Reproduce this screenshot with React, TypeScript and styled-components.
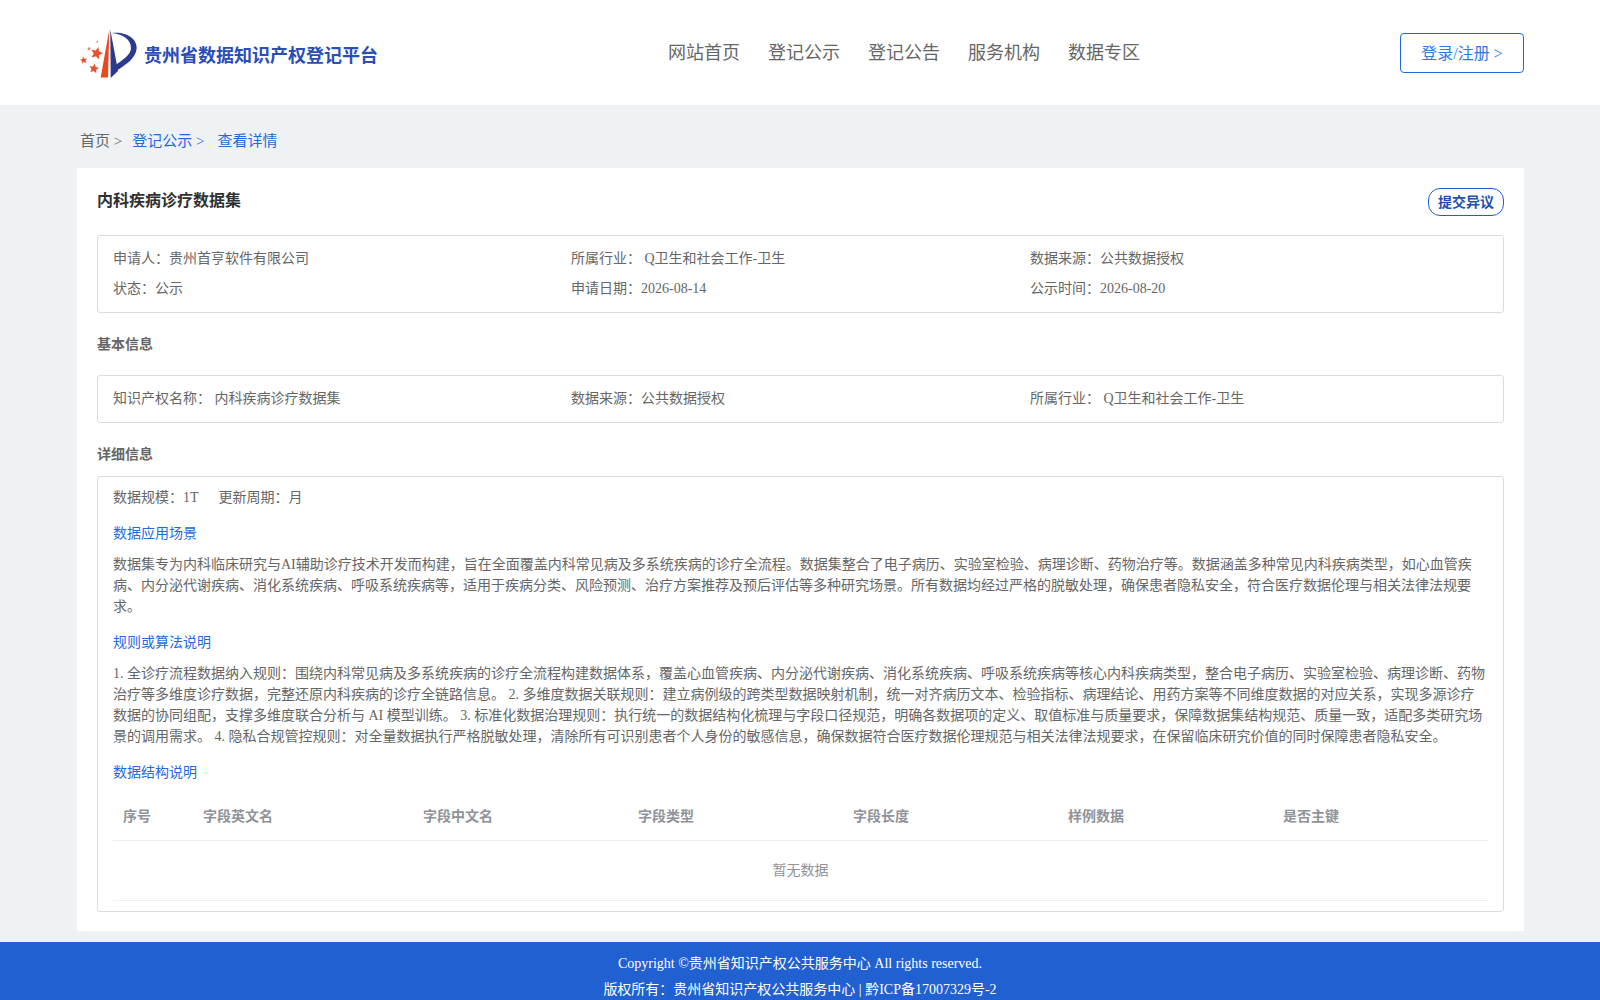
import React from "react";
import styled, { createGlobalStyle } from "styled-components";

const FONT = `"Liberation Serif", "Noto Sans CJK SC", serif`;
const Global = createGlobalStyle`
  html, body { margin: 0; padding: 0; background: #eff2f5; }
  body { font-family: ${FONT}; font-size: 14px; color: #666; }
  * { box-sizing: border-box; }
`;
const Header = styled.header`
  height: 105px; background: #fff; display: flex; align-items: center; padding: 0 76px 0 80px;
`;
const Brand = styled.div`display: flex; align-items: center; width: 588px; padding-top: 2px;`;
const BrandName = styled.span`
  font-size: 18px; font-weight: 700; color: #2a4db8; margin-left: 6px;
  font-family: ${FONT};
`;
const Nav = styled.nav`display: flex; gap: 28px; flex: 1;`;
const NavItem = styled.a`font-size: 18px; color: #666; line-height: 26px;`;
const LoginButton = styled.button`
  width: 124px; height: 40px; border: 1px solid #1e6ae0; border-radius: 4px; background: #fff;
  color: #2b7be8; font: 16px ${FONT}; padding: 0 0 2px;
`;
const Main = styled.main`padding: 0 76px 11px 77px;`;
const Crumbs = styled.div`
  height: 63px; display: flex; align-items: center; padding: 6px 0 0 3px; font-size: 15px;
`;
const Crumb = styled.span<{ $on?: boolean; $gap?: number }>`
  color: ${(p) => (p.$on ? "#1e6ae0" : "#666")}; margin-right: ${(p) => p.$gap ?? 0}px;
`;
const Card = styled.section`background: #fff; padding: 20px; height: 763px;`;
const TitleRow = styled.div`display: flex; justify-content: space-between; align-items: flex-start; height: 47px;`;
const Title = styled.h1`margin: 0; font-size: 16px; line-height: 24px; font-weight: 700; color: #303133; padding-top: 1px;`;
const Dissent = styled.button`
  width: 76px; height: 28px; border: 1px solid #1e5fd0; border-radius: 12px; background: #fff; color: #2150b0;
  font: 700 14px ${FONT}; padding: 0 0 3px;
`;
const Box = styled.div`border: 1px solid #d9dbdf; border-radius: 3px; padding: 0 15px;`;
const InfoGrid = styled(Box)<{ $h: number }>`
  height: ${(p) => p.$h}px; display: grid; grid-template-columns: 458px 459px 1fr; align-content: center; row-gap: 8px;
`;
const Info = styled.div`line-height: 22px; white-space: pre;`;
const Section = styled.h2`
  margin: 0; font-size: 14px; font-weight: 700; color: #666; line-height: 22px; padding: 21px 0 19px;
`;
const DetailTitle = styled(Section)`padding: 21px 0 10px;`;
const Detail = styled(Box)`height: 436px; padding-top: 10px;`;
const Meta = styled.div`display: flex; gap: 20px; line-height: 22px;`;
const SubTitle = styled.h3<{ $top?: number }>`
  margin: 0; padding-top: ${(p) => p.$top ?? 14}px; font-size: 14px; font-weight: 400; color: #1e6ae0; line-height: 22px;
`;
const Para = styled.p`margin: 0; padding-top: 9px; line-height: 21px;`;
const Table = styled.table`width: 100%; border-collapse: collapse; table-layout: fixed; margin-top: 6px;`;
const Th = styled.th<{ $w: number }>`
  width: ${(p) => p.$w}px; height: 50px; padding: 0 10px; text-align: left; font-size: 14px; font-weight: 700; color: #909399;
  border-bottom: 1px solid #ebeef5;
`;
const Empty = styled.td`
  height: 60px; padding: 0 0 2px; text-align: center; color: #909399; border-bottom: 1px solid #ebeef5;
`;
const Footer = styled.footer`
  background: #2160d0; color: #fff; height: 58px; text-align: center; line-height: 26px; padding-top: 9px; overflow: hidden;
`;

const Star = ({ x, y, r, rot = 0 }: { x: number; y: number; r: number; rot?: number }) => {
  const pts = Array.from({ length: 10 }, (_, i) => {
    const a = ((i * 36 - 90 + rot) * Math.PI) / 180;
    const q = i % 2 ? r * 0.45 : r;
    return `${(x + q * Math.cos(a)).toFixed(2)},${(y + q * Math.sin(a)).toFixed(2)}`;
  }).join(" ");
  return <polygon points={pts} fill="#e8512a" />;
};
const Logo = () => (
  <svg width="58" height="50" viewBox="0 0 58 50" aria-hidden="true">
    <Star x={16.7} y={24.3} r={6.5} rot={15} />
    <Star x={3.7} y={31.3} r={3.8} rot={-10} />
    <Star x={14} y={39.7} r={5.2} rot={10} />
    <circle cx={9} cy={19.7} r={1.5} fill="#ee8a6c" />
    <circle cx={17.3} cy={12.7} r={1} fill="#ee8a6c" />
    <path d="M29.3 0.5 L28 48.5 L20.7 48.5 Z" fill="#e8491d" />
    <path d="M30.3 0.5 L38 42 L30.7 49 Z" fill="#2a3a8f" />
    <path d="M31.7 4 C45 2 57 9 56.7 19 C56 29 47 35 36 42 L34.5 37 C42 31 51 26 51 19 C51 10 42 5 31.7 4 Z" fill="#2a3a8f" />
  </svg>
);

const cols = [
  ["序号", 80], ["字段英文名", 220], ["字段中文名", 215], ["字段类型", 215],
  ["字段长度", 215], ["样例数据", 215], ["是否主键", 215],
] as const;

export default function App() {
  return (
    <>
      <Global />
      <Header>
        <Brand>
          <Logo />
          <BrandName>贵州省数据知识产权登记平台</BrandName>
        </Brand>
        <Nav>
          {["网站首页", "登记公示", "登记公告", "服务机构", "数据专区"].map((t) => (
            <NavItem key={t}>{t}</NavItem>
          ))}
        </Nav>
        <LoginButton>登录/注册 &gt;</LoginButton>
      </Header>
      <Main>
        <Crumbs>
          <Crumb $gap={10}>首页 &gt;</Crumb>
          <Crumb $on $gap={13}>登记公示 &gt;</Crumb>
          <Crumb $on>查看详情</Crumb>
        </Crumbs>
        <Card>
          <TitleRow>
            <Title>内科疾病诊疗数据集</Title>
            <Dissent>提交异议</Dissent>
          </TitleRow>
          <InfoGrid $h={78}>
            <Info>申请人：贵州首亨软件有限公司</Info>
            <Info>所属行业： Q卫生和社会工作-卫生</Info>
            <Info>数据来源：公共数据授权</Info>
            <Info>状态：公示</Info>
            <Info>申请日期：2026-08-14</Info>
            <Info>公示时间：2026-08-20</Info>
          </InfoGrid>
          <Section>基本信息</Section>
          <InfoGrid $h={48}>
            <Info>知识产权名称： 内科疾病诊疗数据集</Info>
            <Info>数据来源：公共数据授权</Info>
            <Info>所属行业： Q卫生和社会工作-卫生</Info>
          </InfoGrid>
          <DetailTitle>详细信息</DetailTitle>
          <Detail>
            <Meta>
              <span>数据规模：1T</span>
              <span>更新周期：月</span>
            </Meta>
            <SubTitle>数据应用场景</SubTitle>
            <Para>
              数据集专为内科临床研究与AI辅助诊疗技术开发而构建，旨在全面覆盖内科常见病及多系统疾病的诊疗全流程。数据集整合了电子病历、实验室检验、病理诊断、药物治疗等。数据涵盖多种常见内科疾病类型，如心血管疾病、内分泌代谢疾病、消化系统疾病、呼吸系统疾病等，适用于疾病分类、风险预测、治疗方案推荐及预后评估等多种研究场景。所有数据均经过严格的脱敏处理，确保患者隐私安全，符合医疗数据伦理与相关法律法规要求。
            </Para>
            <SubTitle $top={15}>规则或算法说明</SubTitle>
            <Para>
              1. 全诊疗流程数据纳入规则：围绕内科常见病及多系统疾病的诊疗全流程构建数据体系，覆盖心血管疾病、内分泌代谢疾病、消化系统疾病、呼吸系统疾病等核心内科疾病类型，整合电子病历、实验室检验、病理诊断、药物治疗等多维度诊疗数据，完整还原内科疾病的诊疗全链路信息。 2. 多维度数据关联规则：建立病例级的跨类型数据映射机制，统一对齐病历文本、检验指标、病理结论、用药方案等不同维度数据的对应关系，实现多源诊疗数据的协同组配，支撑多维度联合分析与 AI 模型训练。 3. 标准化数据治理规则：执行统一的数据结构化梳理与字段口径规范，明确各数据项的定义、取值标准与质量要求，保障数据集结构规范、质量一致，适配多类研究场景的调用需求。 4. 隐私合规管控规则：对全量数据执行严格脱敏处理，清除所有可识别患者个人身份的敏感信息，确保数据符合医疗数据伦理规范与相关法律法规要求，在保留临床研究价值的同时保障患者隐私安全。
            </Para>
            <SubTitle $top={15}>数据结构说明</SubTitle>
            <Table>
              <thead>
                <tr>
                  {cols.map(([t, w]) => (
                    <Th key={t} $w={w}>{t}</Th>
                  ))}
                </tr>
              </thead>
              <tbody>
                <tr>
                  <Empty colSpan={7}>暂无数据</Empty>
                </tr>
              </tbody>
            </Table>
          </Detail>
        </Card>
      </Main>
      <Footer>
        <div>Copyright ©贵州省知识产权公共服务中心 All rights reserved.</div>
        <div>版权所有：贵州省知识产权公共服务中心 | 黔ICP备17007329号-2</div>
      </Footer>
    </>
  );
}
